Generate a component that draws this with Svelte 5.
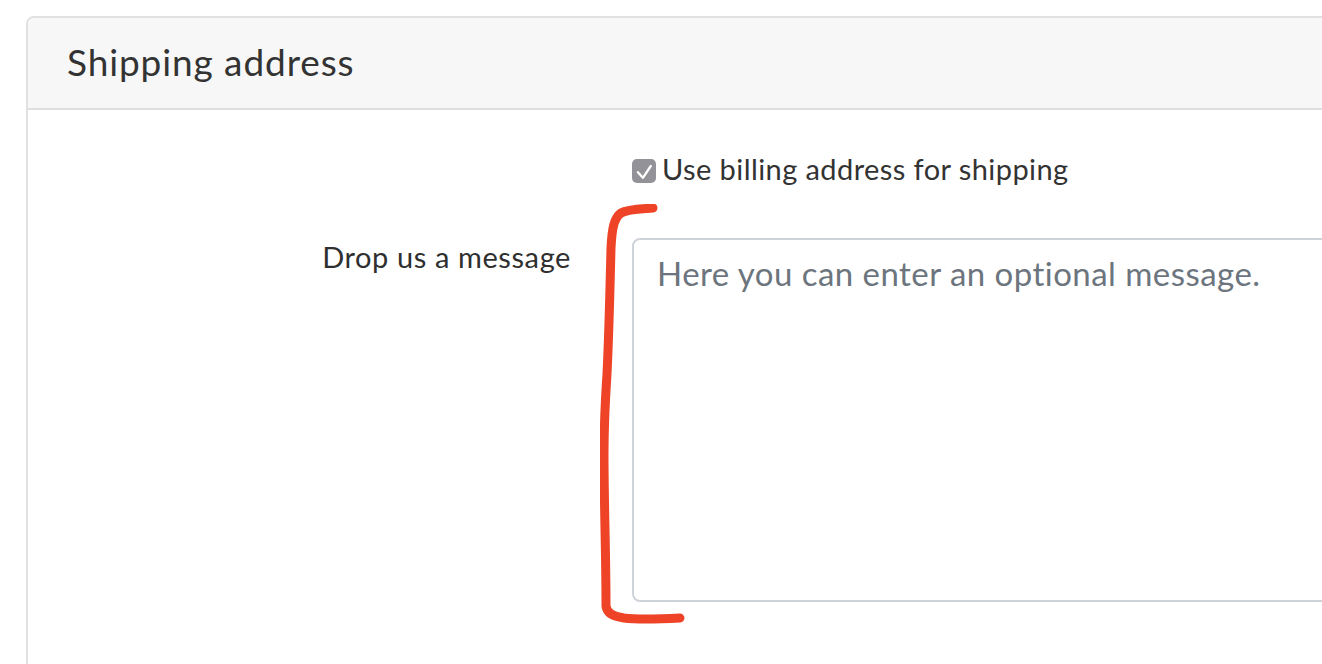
<script>
  let useBilling = true
  let message = ''
</script>

<div class="page">
  <section class="card">
    <header class="card-header">
      <h2>Shipping address</h2>
    </header>

    <div class="card-body">
      <div class="row check-row">
        <div class="label-col"></div>
        <label class="check">
          <input type="checkbox" bind:checked={useBilling} />
          <span class="box" aria-hidden="true">
            <svg viewBox="0 0 24 24" width="24" height="24">
              <path d="M5.9 13.2 L10.9 18.8 L18.8 7" fill="none" stroke="#fff" stroke-width="2.3" stroke-linecap="round" stroke-linejoin="round" />
            </svg>
          </span>
          Use billing address for shipping
        </label>
      </div>

      <div class="row">
        <label class="label-col" for="msg">Drop us a message</label>
        <textarea id="msg" bind:value={message} placeholder="Here you can enter an optional message."></textarea>
      </div>
    </div>
  </section>

  <svg class="scribble" width="100" height="430" viewBox="0 0 100 430" aria-hidden="true">
    <path d="M53 4 C40 5 28 5 21 9 C14 14 12 24 11 44 C10 84 9 130 7 170 C5 200 4 225 4 250 C4 300 6 350 6 402 C7 409 12 412 24 414 C40 416 60 415 80 414" fill="none" stroke="#ee4327" stroke-width="9" stroke-linecap="round" stroke-linejoin="round" />
  </svg>
</div>

<style>
  :global(body) {
    margin: 0;
    background: #fff;
    overflow: hidden;
  }

  .page {
    position: relative;
    width: 1322px;
    height: 664px;
    overflow: hidden;
    padding: 16px 0 0 26px;
    box-sizing: border-box;
    font-family: Lato, "Open Sans", sans-serif;
    color: #2f2f2f;
  }

  .card {
    width: 1500px;
    height: 800px;
    box-sizing: border-box;
    border: 2px solid #e1e1e1;
    border-radius: 8px;
  }

  .card-header {
    height: 92px;
    box-sizing: border-box;
    background: #f7f7f7;
    border-bottom: 2px solid #dfdfdf;
    border-radius: 6px 6px 0 0;
    display: flex;
    align-items: center;
    padding: 0 39px 4px;
  }

  h2 {
    margin: 0;
    font-size: 37px;
    font-weight: 400;
    letter-spacing: 0.9px;
    color: #333;
  }

  .card-body {
    padding-top: 41px;
  }

  .row {
    display: flex;
    gap: 61px;
  }

  .label-col {
    width: 543px;
    flex-shrink: 0;
    text-align: right;
    font-size: 29px;
    line-height: 38px;
    letter-spacing: 0.6px;
  }

  .check-row {
    margin-bottom: 51px;
  }

  .check {
    display: flex;
    align-items: center;
    gap: 6px;
    font-size: 29px;
    line-height: 34px;
    height: 36px;
    letter-spacing: 0.42px;
    color: #333;
  }

  .check input {
    position: absolute;
    opacity: 0;
  }

  .box {
    width: 24px;
    height: 24px;
    border-radius: 5px;
    background: #929298;
    display: block;
    margin-top: 4px;
  }

  .box svg {
    display: block;
  }

  textarea {
    width: 900px;
    height: 364px;
    box-sizing: border-box;
    border: 2px solid #ced4da;
    border-radius: 8px;
    padding: 13px 23px;
    margin: 0;
    font-family: inherit;
    font-size: 33px;
    line-height: 40px;
    letter-spacing: 0.46px;
    resize: none;
    outline: none;
    flex-shrink: 0;
  }

  textarea::placeholder {
    color: #6c757d;
    opacity: 1;
  }

  .scribble {
    position: absolute;
    left: 600px;
    top: 204px;
    pointer-events: none;
  }
</style>
